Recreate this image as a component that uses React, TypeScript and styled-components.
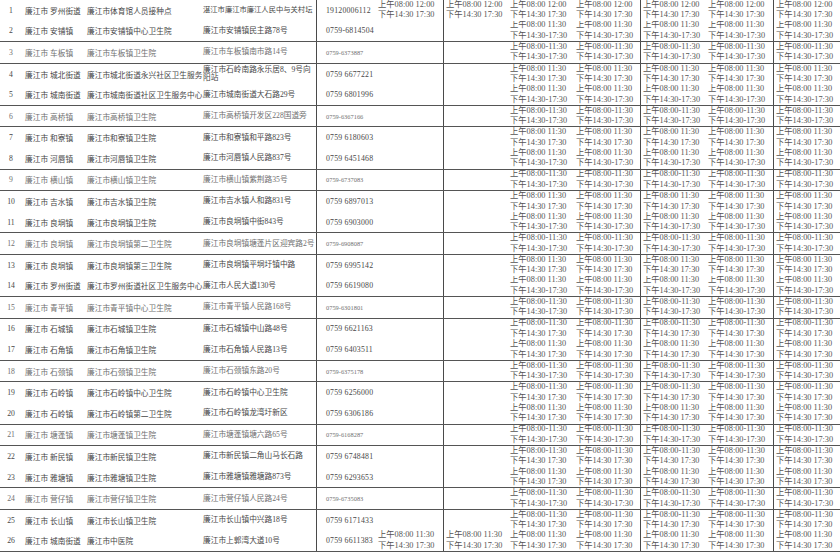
import React from 'react'
import styled, { createGlobalStyle } from 'styled-components'

const GlobalStyle = createGlobalStyle`
  * {
    box-sizing: border-box;
  }
  html, body {
    margin: 0;
    padding: 0;
    background: #fff;
  }
  body {
    font-family: "Liberation Serif", "Noto Sans CJK SC", serif;
    color: #4a4a4a;
  }
`

const COLUMNS = '22px 26px 37px 115px 116px 60px 67px 65px 66px 66px 66px 67px 67px'

export const Sheet = styled.div`
  width: 840px;
  height: 552px;
  display: flex;
  flex-direction: column;
  overflow: hidden;
`

export const Group = styled.div<{ $rows: number }>`
  flex: ${p => p.$rows} 1 0;
  min-height: 0;
  display: flex;
  flex-direction: column;
  border-bottom: 1px solid #555;
`

export const Row = styled.div<{ $faint?: boolean }>`
  flex: 1 1 0;
  min-height: 0;
  display: grid;
  grid-template-columns: ${COLUMNS};
  font-size: 7.7px;
  color: ${p => (p.$faint ? '#707070' : '#474747')};
`

export const Cell = styled.div<{ $line?: boolean; $pad?: number; $center?: boolean }>`
  display: flex;
  align-items: center;
  justify-content: ${p => (p.$center ? 'center' : 'flex-start')};
  padding-left: ${p => p.$pad ?? 2}px;
  border-left: ${p => (p.$line ? '1px solid #4a4a4a' : 'none')};
  white-space: nowrap;
  min-width: 0;
`

export const AddrCell = styled(Cell)<{ $wrap?: boolean; $tight?: boolean }>`
  overflow: hidden;
  white-space: ${p => (p.$wrap ? 'normal' : 'nowrap')};
  font-size: ${p => (p.$tight ? '7.3px' : 'inherit')};
  line-height: 8px;
  padding-right: 1px;
`

export const Phone = styled(Cell)<{ $small?: boolean }>`
  font-size: ${p => (p.$small ? '6.4px' : '7.8px')};
  letter-spacing: ${p => (p.$small ? '0' : '0.2px')};
`

export const TimeCell = styled.div<{ $line?: boolean }>`
  display: flex;
  flex-direction: column;
  justify-content: center;
  padding-left: 2px;
  border-left: ${p => (p.$line ? '1px solid #4a4a4a' : 'none')};
  font-size: 8.3px;
  line-height: 10.5px;
  white-space: nowrap;
  overflow: hidden;
  color: #555;
`

type Times = [string, string]

const T1: Times = ['上午08:00 12:00', '下午14:30 17:30']
const Tss: Times = ['上午08:00 11:30', '下午14:30 17:30']
const Tsd: Times = ['上午08:00 11:30', '下午14:30-17:30']
const Tdd: Times = ['上午08:00-11:30', '下午14:30-17:30']
const Tds: Times = ['上午08:00-11:30', '下午14:30 17:30']

type Site = {
  no: number
  town: string
  org: string
  addr: string
  phone: string
  times: Times
  early?: Times
  wrap?: boolean
  tight?: boolean
}

const groups: Site[][] = [
  [
    { no: 1, town: '罗州街道', org: '廉江市体育馆人员接种点', addr: '湛江市廉江市廉江人民中与关村坛', phone: '19120006112', times: T1, early: T1, tight: true },
    { no: 2, town: '安铺镇', org: '廉江市安铺镇中心卫生院', addr: '廉江市安铺镇民主路78号', phone: '0759-6814504', times: Tsd },
  ],
  [{ no: 3, town: '车板镇', org: '廉江市车板镇卫生院', addr: '廉江市车板镇南市路14号', phone: '0759-6373887', times: Tdd }],
  [
    { no: 4, town: '城北街道', org: '廉江市城北街道永兴社区卫生服务', addr: '廉江市石岭南路永乐居8、9号向阳站', phone: '0759 6677221', times: Tss, wrap: true },
    { no: 5, town: '城南街道', org: '廉江市城南街道社区卫生服务中心', addr: '廉江市城南街道大石路29号', phone: '0759 6801996', times: Tsd },
  ],
  [{ no: 6, town: '高桥镇', org: '廉江市高桥镇卫生院', addr: '廉江市高桥镇开发区228国道旁', phone: '0759-6367166', times: Tdd }],
  [
    { no: 7, town: '和寮镇', org: '廉江市和寮镇卫生院', addr: '廉江市和寮镇和平路823号', phone: '0759 6180603', times: Tss },
    { no: 8, town: '河唇镇', org: '廉江市河唇镇卫生院', addr: '廉江市河唇镇人民路837号', phone: '0759 6451468', times: Tsd },
  ],
  [{ no: 9, town: '横山镇', org: '廉江市横山镇卫生院', addr: '廉江市横山镇紫荆路35号', phone: '0759-6737083', times: Tdd }],
  [
    { no: 10, town: '吉水镇', org: '廉江市吉水镇卫生院', addr: '廉江市吉水镇人和路831号', phone: '0759 6897013', times: Tss },
    { no: 11, town: '良垌镇', org: '廉江市良垌镇卫生院', addr: '廉江市良垌镇中街843号', phone: '0759 6903000', times: Tsd },
  ],
  [{ no: 12, town: '良垌镇', org: '廉江市良垌镇第二卫生院', addr: '廉江市良垌镇塘蓬片区迎宾路2号', phone: '0759-6908087', times: Tdd }],
  [
    { no: 13, town: '良垌镇', org: '廉江市良垌镇第三卫生院', addr: '廉江市良垌镇平垌圩镇中路', phone: '0759 6995142', times: Tss },
    { no: 14, town: '罗州街道', org: '廉江市罗州街道社区卫生服务中心', addr: '廉江市人民大道130号', phone: '0759 6619080', times: Tsd },
  ],
  [{ no: 15, town: '青平镇', org: '廉江市青平镇中心卫生院', addr: '廉江市青平镇人民路168号', phone: '0759-6301801', times: Tdd }],
  [
    { no: 16, town: '石城镇', org: '廉江市石城镇卫生院', addr: '廉江市石城镇中山路48号', phone: '0759 6621163', times: Tds },
    { no: 17, town: '石角镇', org: '廉江市石角镇卫生院', addr: '廉江市石角镇人民路13号', phone: '0759 6403511', times: Tss },
  ],
  [{ no: 18, town: '石颈镇', org: '廉江市石颈镇卫生院', addr: '廉江市石颈镇东路20号', phone: '0759-6375178', times: Tdd }],
  [
    { no: 19, town: '石岭镇', org: '廉江市石岭镇中心卫生院', addr: '廉江市石岭镇中心卫生院', phone: '0759 6256000', times: Tds },
    { no: 20, town: '石岭镇', org: '廉江市石岭镇第二卫生院', addr: '廉江市石岭镇龙湾圩新区', phone: '0759 6306186', times: Tss },
  ],
  [{ no: 21, town: '塘蓬镇', org: '廉江市塘蓬镇卫生院', addr: '廉江市塘蓬镇塘六路65号', phone: '0759-6168287', times: Tdd }],
  [
    { no: 22, town: '新民镇', org: '廉江市新民镇卫生院', addr: '廉江市新民镇二角山马长石路', phone: '0759 6748481', times: Tds },
    { no: 23, town: '雅塘镇', org: '廉江市雅塘镇卫生院', addr: '廉江市雅塘镇雅塘路873号', phone: '0759 6293653', times: Tss },
  ],
  [{ no: 24, town: '营仔镇', org: '廉江市营仔镇卫生院', addr: '廉江市营仔镇人民路24号', phone: '0759-6735083', times: Tdd }],
  [
    { no: 25, town: '长山镇', org: '廉江市长山镇卫生院', addr: '廉江市长山镇中兴路18号', phone: '0759 6171433', times: Tds },
    { no: 26, town: '城南街道', org: '廉江市中医院', addr: '廉江市上郭湾大道10号', phone: '0759 6611383', times: Tss, early: Tss },
  ],
]

// which of the seven time columns carry a ruled line on the left
const timeLines = [false, true, false, false, true, false, true]

function TimeSlot({ times, line }: { times?: Times; line: boolean }) {
  return (
    <TimeCell $line={line}>
      {times && (
        <>
          <span>{times[0]}</span>
          <span>{times[1]}</span>
        </>
      )}
    </TimeCell>
  )
}

function SiteRow({ site, faint }: { site: Site; faint: boolean }) {
  return (
    <Row $faint={faint}>
      <Cell $center $pad={0}>{site.no}</Cell>
      <Cell $pad={3}>廉江市</Cell>
      <Cell>{site.town}</Cell>
      <Cell>{site.org}</Cell>
      <AddrCell $pad={3} $wrap={site.wrap} $tight={site.tight}>{site.addr}</AddrCell>
      <Phone $line $pad={9} $small={faint}>{site.phone}</Phone>
      {timeLines.map((line, i) => (
        <TimeSlot key={i} line={line} times={i < 2 ? site.early : site.times} />
      ))}
    </Row>
  )
}

export default function App() {
  return (
    <>
      <GlobalStyle />
      <Sheet>
        {groups.map((g, gi) => (
          <Group key={gi} $rows={g.length}>
            {g.map(site => (
              <SiteRow key={site.no} site={site} faint={g.length === 1} />
            ))}
          </Group>
        ))}
      </Sheet>
    </>
  )
}
